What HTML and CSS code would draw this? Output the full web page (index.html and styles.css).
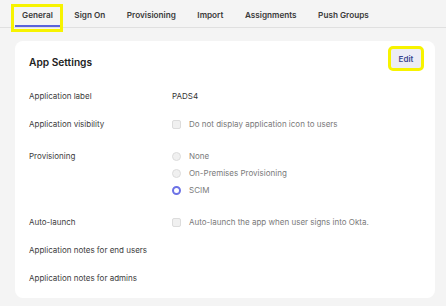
FILE: index.html
```html
<!DOCTYPE html>
<html lang="en">
<head>
    <title>App Settings</title>
    <link rel="stylesheet" href="styles.css">
</head>
<body>
    <div class="tabs">
        <div class="tab active">General</div>
        <div class="tab">Sign On</div>
        <div class="tab">Provisioning</div>
        <div class="tab">Import</div>
        <div class="tab">Assignments</div>
        <div class="tab">Push Groups</div>
    </div>

    <div class="card">
        <div class="cardHead">
            <h2>App Settings</h2>
            <button class="edit">Edit</button>
        </div>

        <div class="row">
            <div class="label">Application label</div>
            <div class="value">PADS4</div>
        </div>
        <div class="row">
            <div class="label">Application visibility</div>
            <div class="option"><span class="box"></span>Do not display application icon to users</div>
        </div>
        <div class="row group">
            <div class="label">Provisioning</div>
            <div class="options">
                <div class="option"><span class="radio"></span>None</div>
                <div class="option"><span class="radio"></span>On-Premises Provisioning</div>
                <div class="option"><span class="radio on"></span>SCIM</div>
            </div>
        </div>
        <div class="row">
            <div class="label">Auto-launch</div>
            <div class="option"><span class="box"></span>Auto-launch the app when user signs into Okta.</div>
        </div>
        <div class="row">
            <div class="label">Application notes for end users</div>
        </div>
        <div class="row">
            <div class="label">Application notes for admins</div>
        </div>
    </div>
</body>
</html>
```

FILE: styles.css
```css
* {
    margin: 0;
    padding: 0;
    box-sizing: border-box;
    font-family: 'Inter', 'Liberation Sans', sans-serif;
}

body {
    background: #f4f4f4;
    width: 446px;
    height: 306px;
    overflow: hidden;
}

.tabs {
    display: flex;
    gap: 7.5px;
    height: 28px;
    padding-left: 15px;
    border-bottom: 1px solid #e0e0e0;
}

.tab {
    position: relative;
    padding: 10px 7px 4px;
    line-height: 11px;
    font-size: 8.2px;
    font-weight: 600;
    color: #3a3a3a;
    border-bottom: 2px solid transparent;
}

.tab.active {
    border-bottom-color: #5a63dc;
}

.tab.active::after {
    content: "";
    position: absolute;
    left: -4px;
    right: -3px;
    top: 4px;
    bottom: -7px;
    border: 3px solid #f7f300;
}

.card {
    margin: 13px 11px 0 15px;
    height: 257px;
    background: #fff;
    border-radius: 8px;
    padding: 0 14px;
}

.cardHead {
    display: flex;
    justify-content: space-between;
    align-items: flex-start;
    height: 41px;
    padding-top: 7px;
}

.cardHead h2 {
    margin-top: 7px;
    font-size: 10.2px;
    line-height: 14px;
    font-weight: 600;
    color: #222;
}

.edit {
    width: 30px;
    height: 19px;
    margin-top: 1px;
    border: none;
    border-radius: 2px;
    background: #ececf6;
    color: #3b4690;
    font-size: 8px;
    font-weight: 600;
    outline: 3px solid #f7f300;
}

.row {
    display: flex;
    padding: 8px 0;
    line-height: 12px;
    font-size: 8px;
}

.row.group {
    padding: 12px 0;
}

.label {
    width: 143px;
    color: #3c3c3c;
}

.value {
    color: #333;
}

.options {
    display: flex;
    flex-direction: column;
    gap: 5px;
}

.option {
    display: flex;
    align-items: center;
    color: #7a7a7a;
}

.box, .radio {
    width: 9px;
    height: 9px;
    margin-right: 8px;
    border: 1px solid #dcdcdc;
    background: #f0f0f0;
}

.box {
    border-radius: 2px;
}

.radio {
    border-radius: 50%;
}

.radio.on {
    background: #fff;
    border: 2.5px solid #6c72e6;
}
```
